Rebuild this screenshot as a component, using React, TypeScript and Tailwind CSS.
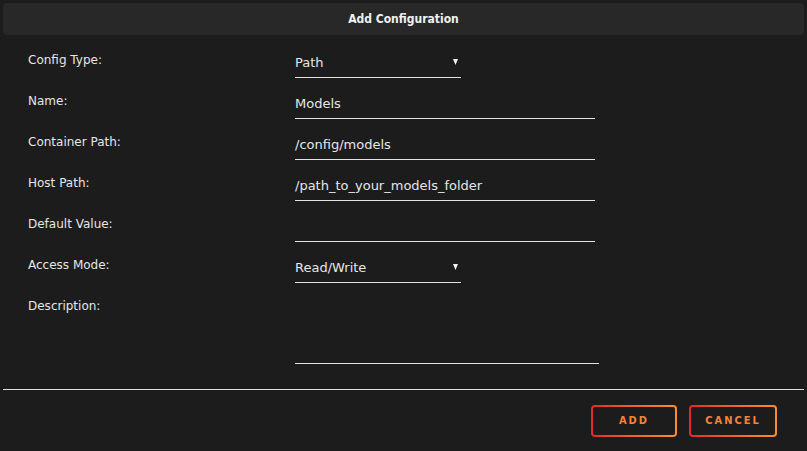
import React from "react"

const condensed = { fontFamily: '"DejaVu Sans Condensed", "DejaVu Sans", sans-serif' }
const regular = { fontFamily: '"DejaVu Sans", sans-serif' }

const rows = [
  { label: "Config Type:", value: "Path", kind: "select" },
  { label: "Name:", value: "Models", kind: "text" },
  { label: "Container Path:", value: "/config/models", kind: "text" },
  { label: "Host Path:", value: "/path_to_your_models_folder", kind: "text" },
  { label: "Default Value:", value: "", kind: "text" },
  { label: "Access Mode:", value: "Read/Write", kind: "select" },
]

const Arrow = () => (
  <svg width="5" height="6" viewBox="0 0 5 6" className="absolute right-[3px] top-[11px]">
    <path d="M0 0 H5 L2.5 6 Z" fill="#f2f2f2" />
  </svg>
)

const GradientButton = ({ label, width }: { label: string; width: string }) => (
  <div className={`rounded-[4px] bg-gradient-to-r from-[#e4262a] to-[#fb8d2c] p-[2px] ${width}`}>
    <div className="flex h-[28px] items-center justify-center rounded-[2px] bg-[#1c1c1c]">
      <span className="text-[11px] font-bold tracking-[0.18em] text-[#f4843a]" style={condensed}>
        {label}
      </span>
    </div>
  </div>
)

export default function App() {
  return (
    <div className="h-[451px] w-[807px] bg-[#1c1c1c] text-[#e6e6e6]" style={regular}>
      <div className="px-[3px] pt-[3px]">
        <div className="flex h-[32px] items-center justify-center rounded-[4px] bg-[#282828]">
          <span className="text-[12px] font-bold text-[#f0f0f0]" style={condensed}>
            Add Configuration
          </span>
        </div>
      </div>

      <div className="flex flex-col gap-[11px] pt-[13px]">
        {rows.map((r) => (
          <div key={r.label} className="flex h-[30px]">
            <div className="w-[295px] pl-[28px] pt-[3px] text-[12px]">{r.label}</div>
            <div
              className={`relative flex items-center border-b border-[#e2e2e2] text-[13px] ${
                r.kind === "select" ? "w-[166px]" : "w-[300px]"
              }`}
            >
              {r.value}
              {r.kind === "select" && <Arrow />}
            </div>
          </div>
        ))}
        <div className="flex h-[70px]">
          <div className="w-[295px] pl-[28px] pt-[3px] text-[12px]">Description:</div>
          <div className="w-[304px] border-b border-[#e2e2e2]" />
        </div>
      </div>

      <div className="mx-[3px] mt-[25px] border-t border-[#e0e0e0]" />

      <div className="flex justify-end gap-[12px] pr-[30px] pt-[15px]">
        <GradientButton label="ADD" width="w-[86px]" />
        <GradientButton label="CANCEL" width="w-[88px]" />
      </div>
    </div>
  )
}
